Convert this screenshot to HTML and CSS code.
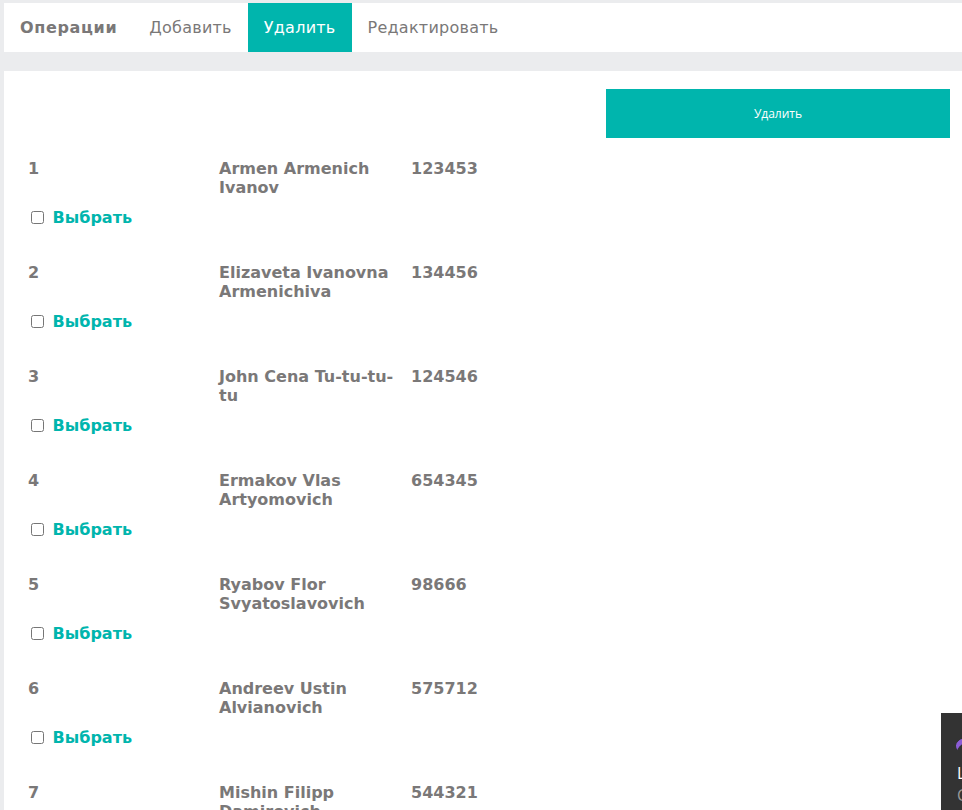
FILE: index.html
```html
<!DOCTYPE html>
<html lang="ru">
<head>
<meta charset="utf-8">
<title>Удалить</title>
<link rel="stylesheet" href="styles.css">
</head>
<body>
<nav class="menu">
  <span class="menu-header">Операции</span>
  <a class="menu-item" href="#">Добавить</a>
  <a class="menu-item active" href="#">Удалить</a>
  <a class="menu-item" href="#">Редактировать</a>
</nav>
<main class="panel">
  <div class="actions">
    <button class="btn-delete" type="button">Удалить</button>
  </div>
  <div class="list">
    <div class="record">
      <div class="cols"><span>1</span><span>Armen Armenich Ivanov</span><span>123453</span></div>
      <label class="pick"><input type="checkbox"> Выбрать</label>
    </div>
    <div class="record">
      <div class="cols"><span>2</span><span>Elizaveta Ivanovna Armenichiva</span><span>134456</span></div>
      <label class="pick"><input type="checkbox"> Выбрать</label>
    </div>
    <div class="record">
      <div class="cols"><span>3</span><span>John Cena Tu-tu-tu-tu</span><span>124546</span></div>
      <label class="pick"><input type="checkbox"> Выбрать</label>
    </div>
    <div class="record">
      <div class="cols"><span>4</span><span>Ermakov Vlas Artyomovich</span><span>654345</span></div>
      <label class="pick"><input type="checkbox"> Выбрать</label>
    </div>
    <div class="record">
      <div class="cols"><span>5</span><span>Ryabov Flor Svyatoslavovich</span><span>98666</span></div>
      <label class="pick"><input type="checkbox"> Выбрать</label>
    </div>
    <div class="record">
      <div class="cols"><span>6</span><span>Andreev Ustin Alvianovich</span><span>575712</span></div>
      <label class="pick"><input type="checkbox"> Выбрать</label>
    </div>
    <div class="record">
      <div class="cols"><span>7</span><span>Mishin Filipp Damirovich</span><span>544321</span></div>
      <label class="pick"><input type="checkbox"> Выбрать</label>
    </div>
  </div>
</main>
<aside class="toast">
  <span class="toast-icon"></span>
  <span class="toast-title">L</span>
  <span class="toast-sub">C</span>
</aside>
</body>
</html>
```
FILE: styles.css
```css
html, body {
  margin: 0;
  padding: 0;
}
body {
  background: #ebecee;
  font-family: "DejaVu Sans", Verdana, sans-serif;
  color: #7a7878;
  padding: 3px 0 0 4px;
}
.menu {
  display: flex;
  background: #fff;
  height: 49px;
  align-items: stretch;
}
.menu-header,
.menu-item {
  display: flex;
  align-items: center;
  padding: 0 16px;
  font-size: 16px;
  letter-spacing: 0.25px;
  color: #7a7878;
  text-decoration: none;
}
.menu-header {
  font-weight: bold;
  letter-spacing: 0.65px;
}
.menu-item.active {
  background: #00b5ad;
  color: #fff;
}
.panel {
  background: #fff;
  margin-top: 19px;
  padding: 18px 12px 0 24px;
  min-height: 800px;
}
.actions {
  display: flex;
  justify-content: flex-end;
}
.btn-delete {
  width: 344px;
  height: 49px;
  border: 0;
  background: #00b5ad;
  color: #fff;
  font-family: "Open Sans", "Liberation Sans", sans-serif;
  font-size: 12px;
  cursor: pointer;
}
.list {
  padding-top: 21px;
}
.record {
  height: 104px;
  font-weight: bold;
  font-size: 16px;
  line-height: 19px;
}
.cols {
  display: grid;
  grid-template-columns: 191px 192px auto;
  min-height: 38px;
}
.cols span:nth-child(2) {
  padding-right: 8px;
}
.pick {
  display: block;
  margin-top: 11px;
  color: #00b5ad;
}
.pick input {
  margin: 3px 3px 3px 3px;
  vertical-align: -1px;
}
.toast {
  position: fixed;
  left: 941px;
  top: 713px;
  width: 21px;
  height: 97px;
  background: #333;
  overflow: hidden;
  font-family: "Open Sans", sans-serif;
}
.toast-icon {
  position: absolute;
  left: 15px;
  top: 26px;
  width: 14px;
  height: 14px;
  border-radius: 50%;
  border-top: 5px solid #8b5cd6;
  box-sizing: border-box;
  transform: rotate(-40deg);
}
.toast-title {
  position: absolute;
  left: 16px;
  top: 49px;
  color: #fff;
  font-size: 16px;
}
.toast-sub {
  position: absolute;
  left: 16px;
  top: 71px;
  color: #999;
  font-size: 16px;
}
```
